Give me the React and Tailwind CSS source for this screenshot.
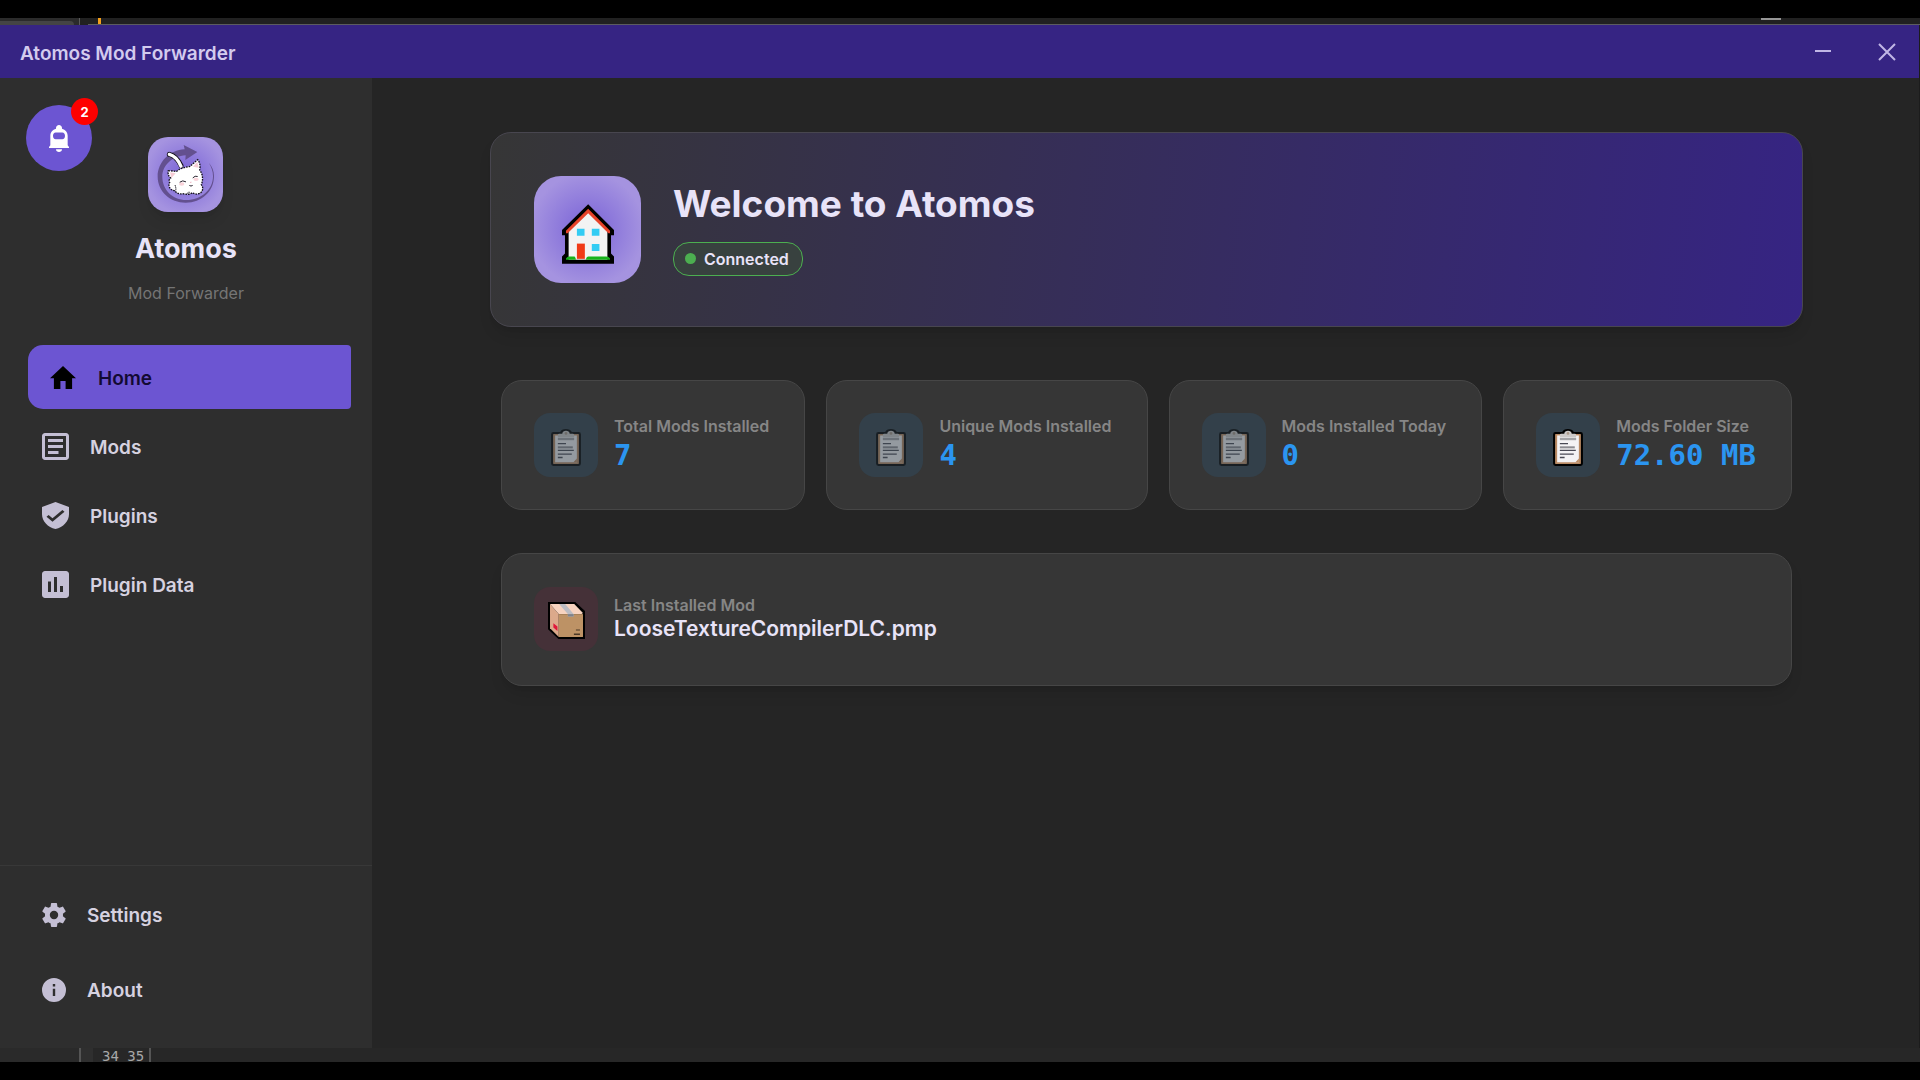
function HomeIcon() {
  return (
    <svg viewBox="2 3 20 17" preserveAspectRatio="none" className="h-[23px] w-[26px] shrink-0" fill="currentColor" aria-hidden="true">
      <path d="M10 20v-6h4v6h5v-8h3L12 3 2 12h3v8z" />
    </svg>
  );
}

function ArticleIcon() {
  return (
    <svg viewBox="3 3 18 18" className="size-[27px] shrink-0" fill="currentColor" aria-hidden="true">
      <path d="M19 5v14H5V5h14m0-2H5c-1.100 0-2 .9-2 2v14c0 1.100.9 2 2 2h14c1.100 0 2-.9 2-2V5c0-1.100-.9-2-2-2z" />
      <path d="M14 17H7v-2h7v2zm3-4H7v-2h10v2zm0-4H7V7h10v2z" />
    </svg>
  );
}

function ShieldIcon() {
  return (
    <svg viewBox="3 1 18 22" preserveAspectRatio="none" className="size-[27px] shrink-0" fill="currentColor" aria-hidden="true">
      <path d="M10 17L6 13L7.410 11.590L10 14.170L16.590 7.580L18 9M12 1L3 5V11C3 16.550 6.840 21.740 12 23C17.160 21.740 21 16.550 21 11V5L12 1Z" />
    </svg>
  );
}

function ChartIcon() {
  return (
    <svg viewBox="3 3 18 18" className="size-[27px] shrink-0" fill="currentColor" aria-hidden="true">
      <path d="M19 3H5c-1.100 0-2 .9-2 2v14c0 1.100.9 2 2 2h14c1.100 0 2-.9 2-2V5c0-1.100-.9-2-2-2zM9 17H7v-7h2v7zm4 0h-2V7h2v10zm4 0h-2v-4h2v4z" />
    </svg>
  );
}

function CogIcon() {
  return (
    <svg viewBox="2 2 20 20" className="size-6 shrink-0" fill="currentColor" aria-hidden="true">
      <path d="M12 15.500A3.500 3.500 0 0 1 8.500 12A3.500 3.500 0 0 1 12 8.500A3.500 3.500 0 0 1 15.500 12A3.500 3.500 0 0 1 12 15.500M19.430 12.970C19.470 12.650 19.500 12.330 19.500 12C19.500 11.670 19.470 11.340 19.430 11L21.540 9.370C21.730 9.220 21.780 8.950 21.660 8.730L19.660 5.270C19.540 5.050 19.270 4.960 19.050 5.050L16.560 6.050C16.040 5.660 15.500 5.320 14.870 5.070L14.500 2.420C14.460 2.180 14.250 2 14 2H10C9.750 2 9.540 2.180 9.500 2.420L9.130 5.070C8.500 5.320 7.960 5.660 7.440 6.050L4.950 5.050C4.730 4.960 4.460 5.050 4.340 5.270L2.340 8.730C2.210 8.950 2.270 9.220 2.460 9.370L4.570 11C4.530 11.340 4.500 11.670 4.500 12C4.500 12.330 4.530 12.650 4.570 12.970L2.460 14.630C2.270 14.780 2.210 15.050 2.340 15.270L4.340 18.730C4.460 18.950 4.730 19.030 4.950 18.950L7.440 17.940C7.960 18.340 8.500 18.680 9.130 18.930L9.500 21.580C9.540 21.820 9.750 22 10 22H14C14.250 22 14.460 21.820 14.500 21.580L14.870 18.930C15.500 18.670 16.040 18.340 16.560 17.940L19.050 18.950C19.270 19.030 19.540 18.950 19.660 18.730L21.660 15.270C21.780 15.050 21.730 14.780 21.540 14.630L19.430 12.970Z" />
    </svg>
  );
}

function InfoIcon() {
  return (
    <svg viewBox="2 2 20 20" className="size-6 shrink-0" fill="currentColor" aria-hidden="true">
      <path d="M13 9H11V7H13M13 17H11V11H13M12 2A10 10 0 0 0 2 12A10 10 0 0 0 12 22A10 10 0 0 0 22 12A10 10 0 0 0 12 2Z" />
    </svg>
  );
}

function BellIcon() {
  return (
    <svg viewBox="0 0 60 80" preserveAspectRatio="none" className="h-[27px] w-5" fill="white" aria-hidden="true">
      <path
        fillRule="evenodd"
        d="M30 0c5 0 9 4 9 9v2c10 3 17 10 17 21v28l4 5v3H0v-3l4-5V32C4 21 11 14 21 11V9c0-5 4-9 9-9zM20 22c-5 0-8 4-8 10s3 10 8 10h20c5 0 8-4 8-10s-3-10-8-10z"
      />
      <path d="M21 72h18c0 5-4 8-9 8s-9-3-9-8z" />
    </svg>
  );
}

function CatLogo() {
  return (
    <svg viewBox="25 21 225 225" className="size-full" aria-hidden="true">
      <path d="M173 66L132 45L135 58C90 60 54 96 54 140C54 184 92 218 138 218C186 218 223 184 223 138C223 122 217 108 207 98C215 110 220 124 220 138C220 180 184 210 140 210C98 210 68 178 68 140C68 106 98 78 138 76L137 90Z" fill="#63508f" />
      <path d="M89 73C104 77 116 90 124 107" fill="none" stroke="#15121c" strokeWidth="15" strokeDasharray="4 2" strokeLinecap="round" />
      <path d="M89 73C104 77 116 90 124 109" fill="none" stroke="#fff" strokeWidth="10" strokeLinecap="round" />
      <path
        d="M86 122L111 124C122 114 138 112 151 109L174 89C182 98 182 112 180 120C191 134 190 152 185 164C193 174 188 186 181 190C172 194 164 192 158 188C150 194 140 194 130 191C118 194 108 188 106 182C92 182 84 168 90 157C86 152 90 146 93 144C86 138 84 130 86 122Z"
        fill="#fff"
        stroke="#15121c"
        strokeWidth="4"
        strokeDasharray="5 3"
      />
      <path d="M91 127L108 130L95 144ZM160 110L173 95L177 113Z" fill="#f6cdd6" />
      <g fill="#f9d3da">
        <ellipse cx="126" cy="162" rx="8" ry="5" />
        <ellipse cx="169" cy="148" rx="8" ry="5" />
      </g>
      <g fill="none" stroke="#2b2530" strokeWidth="3" strokeLinecap="round">
        <path d="M121 156q8-7 17-1M160 143q6-7 13-4M150 167q4 3 8 0" />
      </g>
      <path d="M150 156l6-1-2 4z" fill="#e89bab" />
      <path d="M106 165q4 10 2 17M142 191q4-7 10-3" fill="none" stroke="#15121c" strokeWidth="3" strokeDasharray="4 2" />
    </svg>
  );
}

function HouseEmoji() {
  return (
    <svg viewBox="91 98 157 180" className="mt-[9px] h-[60px] w-[52px]" aria-hidden="true">
      <path d="M170 98L248 176V192H239V247L248 256V278H91V256L100 247V192H91V176Z" fill="#000" />
      <path d="M170 122L228 180V266H111V180Z" fill="#f3f3f3" />
      <path d="M170 112L236 178V186H231L170 125L108 186H103V178Z" fill="#e8432a" />
      <path d="M103 266v-4q4-6 10-6h16q4 4 4 10zM163 266q2-10 8-10h53q9 0 12 6v4z" fill="#17b31b" />
      <rect x="136" y="217" width="24" height="46" fill="#f03a17" />
      <path d="M136 172h23v21h-23zM181 172h23v21h-23zM181 218h23v21h-23z" fill="#33ccf3" />
    </svg>
  );
}

function ClipboardEmoji() {
  return (
    <svg viewBox="90 86 88 109" className="mt-1 h-[37px] w-[30px]" aria-hidden="true">
      <path d="M97 95H117C120 83 147 83 151 95H171Q178 95 178 102V188Q178 195 171 195H97Q90 195 90 188V102Q90 95 97 95Z" fill="#000" />
      <rect x="96" y="101" width="76" height="88" rx="2" fill="#b98a63" />
      <path d="M102 105H166V184H102Z" fill="#f4f3f5" />
      <path d="M156 184L166 173V184Z" fill="#b98a63" />
      <path d="M110 110V103Q110 100 114 100H123C123 88 145 88 145 100H154Q158 100 158 103V110Z" fill="#ccc9c8" />
      <circle cx="134" cy="99" r="4" fill="#a98" />
      <path d="M110 112h48v7h-48z" fill="#a3a3a6" />
      <path d="M110 137h44v6h-44z" fill="#8d8d92" />
      <path d="M110 127h24v4h-24zM110 147h47v4h-47zM110 158h41v4h-41zM110 168h14v4h-14z" fill="#4a4a55" />
    </svg>
  );
}

function PackageEmoji() {
  return (
    <svg viewBox="205 186 110 110" className="mt-[2px] size-[37px]" aria-hidden="true">
      <path d="M205 186H286L315 213V296H236L205 267Z" fill="#000" />
      <path d="M211 192L237 222V290L211 264Z" fill="#dba98b" />
      <path d="M211 192H283L309 219L305 222H237Z" fill="#f7d3bf" />
      <path d="M237 222H309V290H237Z" fill="#bd9265" />
      <path d="M238 192H256L281 222V229H264V222Z" fill="#bcbcc2" />
      <path d="M264 222h17v7h-17z" fill="#80838a" />
      <path d="M221 249L233 259V272L221 262Z" fill="#e0183a" />
      <path d="M288 268h12v3h-12zM282 280h18v4h-18z" fill="#4b3826" />
    </svg>
  );
}

const navItems = [
  { label: "Mods", Icon: ArticleIcon },
  { label: "Plugins", Icon: ShieldIcon },
  { label: "Plugin Data", Icon: ChartIcon },
];

const footerItems = [
  { label: "Settings", Icon: CogIcon },
  { label: "About", Icon: InfoIcon },
];

const stats = [
  { label: "Total Mods Installed", value: "7", dim: true },
  { label: "Unique Mods Installed", value: "4", dim: true },
  { label: "Mods Installed Today", value: "0", dim: true },
  { label: "Mods Folder Size", value: "72.60 MB", dim: false },
];

function EditorTop() {
  return (
    <div className="flex h-[7px] shrink-0 items-stretch bg-[#212121]" aria-hidden="true">
      <div className="flex w-[79px] items-end bg-[#2b2b2b]">
        <div className="h-1 w-[74px] rounded-tr bg-[#444444]" />
      </div>
      <div className="w-px bg-[#5a5a5a]" />
      <div className="w-2" />
      <div className="flex flex-1 border-b border-[#5c5c60]">
        <div className="ml-[10px] w-[3px] bg-[#f5a01c]" />
        <div className="mr-[139px] ml-auto h-[2px] w-5 bg-[#969696]" />
      </div>
    </div>
  );
}

function EditorBottom() {
  return (
    <div className="flex h-[14px] shrink-0 bg-[#272727]" aria-hidden="true">
      <div className="w-[79px] bg-[#2a2a2a]" />
      <div className="w-[2px] bg-[#555555]" />
      <div className="w-3 bg-[#2f2f2f]" />
      <div className="w-14 pl-[9px] font-['DejaVu_Sans_Mono',monospace] text-[14px] leading-[17px] whitespace-pre text-[#a8a8a8]">34 35</div>
      <div className="w-[2px] bg-[#555555]" />
    </div>
  );
}

function TitleBar() {
  return (
    <header className="flex h-[53px] shrink-0 items-stretch justify-between bg-[#362483]">
      <h1 className="flex items-center pt-1 pl-5 text-[19px] leading-6 font-semibold text-[#d3cbee]">Atomos Mod Forwarder</h1>
      <div className="flex text-[#c0b6e6]">
        <button type="button" aria-label="Minimize" className="flex w-16 items-center justify-center">
          <svg viewBox="0 0 18 18" className="size-[18px]" aria-hidden="true">
            <path d="M1 8h16" stroke="currentColor" strokeWidth="2" />
          </svg>
        </button>
        <button type="button" aria-label="Close" className="flex w-16 items-center justify-center">
          <svg viewBox="0 0 18 18" className="size-[18px]" aria-hidden="true">
            <path d="M1 1l16 16M17 1L1 17" stroke="currentColor" strokeWidth="2" />
          </svg>
        </button>
      </div>
    </header>
  );
}

function Sidebar() {
  return (
    <aside className="flex w-[372px] shrink-0 flex-col bg-[#2e2e2e] text-[19px] leading-6 font-semibold">
      <div className="grid px-[26px] pt-[27px]">
        <button type="button" aria-label="Notifications, 2 unread" className="relative col-start-1 row-start-1 flex size-[66px] items-center justify-center justify-self-start rounded-full bg-[#6c55d2]">
          <BellIcon />
          <span className="absolute -top-[7px] -right-[6px] flex size-[27px] items-center justify-center rounded-full bg-[#fe0000] text-[13px] leading-4 font-bold text-white">2</span>
        </button>
        <div className="col-start-1 row-start-1 mt-8 flex flex-col items-center justify-self-center">
          <div className="size-[75px] overflow-hidden rounded-[20px] bg-radial from-[#7a61d6] to-[#a593e0] to-75% shadow-lg shadow-black/10">
            <CatLogo />
          </div>
          <p className="mt-[21px] text-[27px] leading-8 font-bold text-[#e8e3f8]">Atomos</p>
          <p className="mt-4 text-[16px] leading-6 font-normal text-[#757575]">Mod Forwarder</p>
        </div>
      </div>
      <nav className="mt-10 flex flex-col gap-[5px] pr-[21px] pl-7">
        <button type="button" aria-current="page" className="flex h-16 items-center gap-[22px] rounded-l-[15px] rounded-r bg-[#6c55d2] pl-[22px] text-[#130a33]">
          <span className="text-black"><HomeIcon /></span>
          <span className="pt-1">Home</span>
        </button>
        {navItems.map(({ label, Icon }) => (
          <button key={label} type="button" className="flex h-16 items-center gap-[21px] pl-[14px] text-[#d6d2e0]">
            <span className="text-[#c4bfd4]"><Icon /></span>
            <span className="pt-1">{label}</span>
          </button>
        ))}
      </nav>
      <div className="mt-auto flex flex-col gap-[11px] border-t border-[#383838] pt-[17px] pr-[21px] pb-[26px] pl-[42px]">
        {footerItems.map(({ label, Icon }) => (
          <button key={label} type="button" className="flex h-16 items-center gap-[21px] text-[#d6d2e0]">
            <span className="text-[#c4bfd4]"><Icon /></span>
            <span className="pt-[2px]">{label}</span>
          </button>
        ))}
      </div>
    </aside>
  );
}

function Hero() {
  return (
    <section className="flex items-center gap-8 rounded-[21px] border border-[#48464f] bg-linear-[97deg] from-[#363636] to-[#362483] p-[43px] shadow-lg shadow-black/10">
      <div className="flex size-[107px] shrink-0 items-center justify-center rounded-[27px] bg-radial from-[#7a61d6] to-[#a593e0] to-75%">
        <HouseEmoji />
      </div>
      <div className="flex flex-col items-start gap-4 pb-[3px]">
        <h2 className="text-[37px] leading-[45px] font-bold text-[#e8e3f8]">Welcome to Atomos</h2>
        <div className="flex h-[34px] items-center gap-2 rounded-2xl border border-[#4caf50] bg-[#38413f] pr-[13px] pl-[11px] text-[16px] leading-6 font-semibold text-[#e8e3f8]">
          <span className="size-[11px] rounded-full bg-[#4caf50]" />
          Connected
        </div>
      </div>
    </section>
  );
}

function StatCard({ label, value, dim }) {
  return (
    <div className="flex grow items-center gap-4 rounded-[21px] border border-[#464646] bg-[#363636] p-8">
      <div className="flex size-16 shrink-0 items-center justify-center rounded-2xl bg-[#33404a]">
        <span className={dim ? "opacity-50" : ""}><ClipboardEmoji /></span>
      </div>
      <dl className="pb-[2px]">
        <dt className="text-[16px] leading-[22px] font-semibold text-[#868686]">{label}</dt>
        <dd className="font-['DejaVu_Sans_Mono',monospace] text-[29px] leading-9 font-bold text-[#2b95f0]">{value}</dd>
      </dl>
    </div>
  );
}

export default function App() {
  return (
    <div className="flex min-h-screen flex-col bg-black py-[18px] font-[Inter,sans-serif]">
      <EditorTop />
      <div className="flex flex-1 flex-col border-r border-[#1c1c1c] bg-[#252525]">
        <TitleBar />
        <div className="flex flex-1">
          <Sidebar />
          <main className="flex-1 pt-[54px] pr-8 pb-8 pl-[34px]">
            <div className="mx-auto max-w-[1313px]">
              <Hero />
              <div className="px-[11px]">
                <div className="mt-[53px] flex flex-wrap gap-[21px]">
                  {stats.map((s) => (
                    <StatCard key={s.label} {...s} />
                  ))}
                </div>
                <section className="mt-[43px] flex items-center gap-4 rounded-[21px] border border-[#464646] bg-[#363636] px-8 pt-[33px] pb-[34px] shadow-lg shadow-black/10">
                  <div className="flex size-16 shrink-0 items-center justify-center rounded-2xl bg-[#453138]">
                    <PackageEmoji />
                  </div>
                  <div className="pb-[2px]">
                    <p className="text-[16px] leading-[22px] font-semibold text-[#868686]">Last Installed Mod</p>
                    <p className="text-[21px] leading-[26px] font-semibold text-[#e8e3f8]">LooseTextureCompilerDLC.pmp</p>
                  </div>
                </section>
              </div>
            </div>
          </main>
        </div>
      </div>
      <EditorBottom />
    </div>
  );
}
